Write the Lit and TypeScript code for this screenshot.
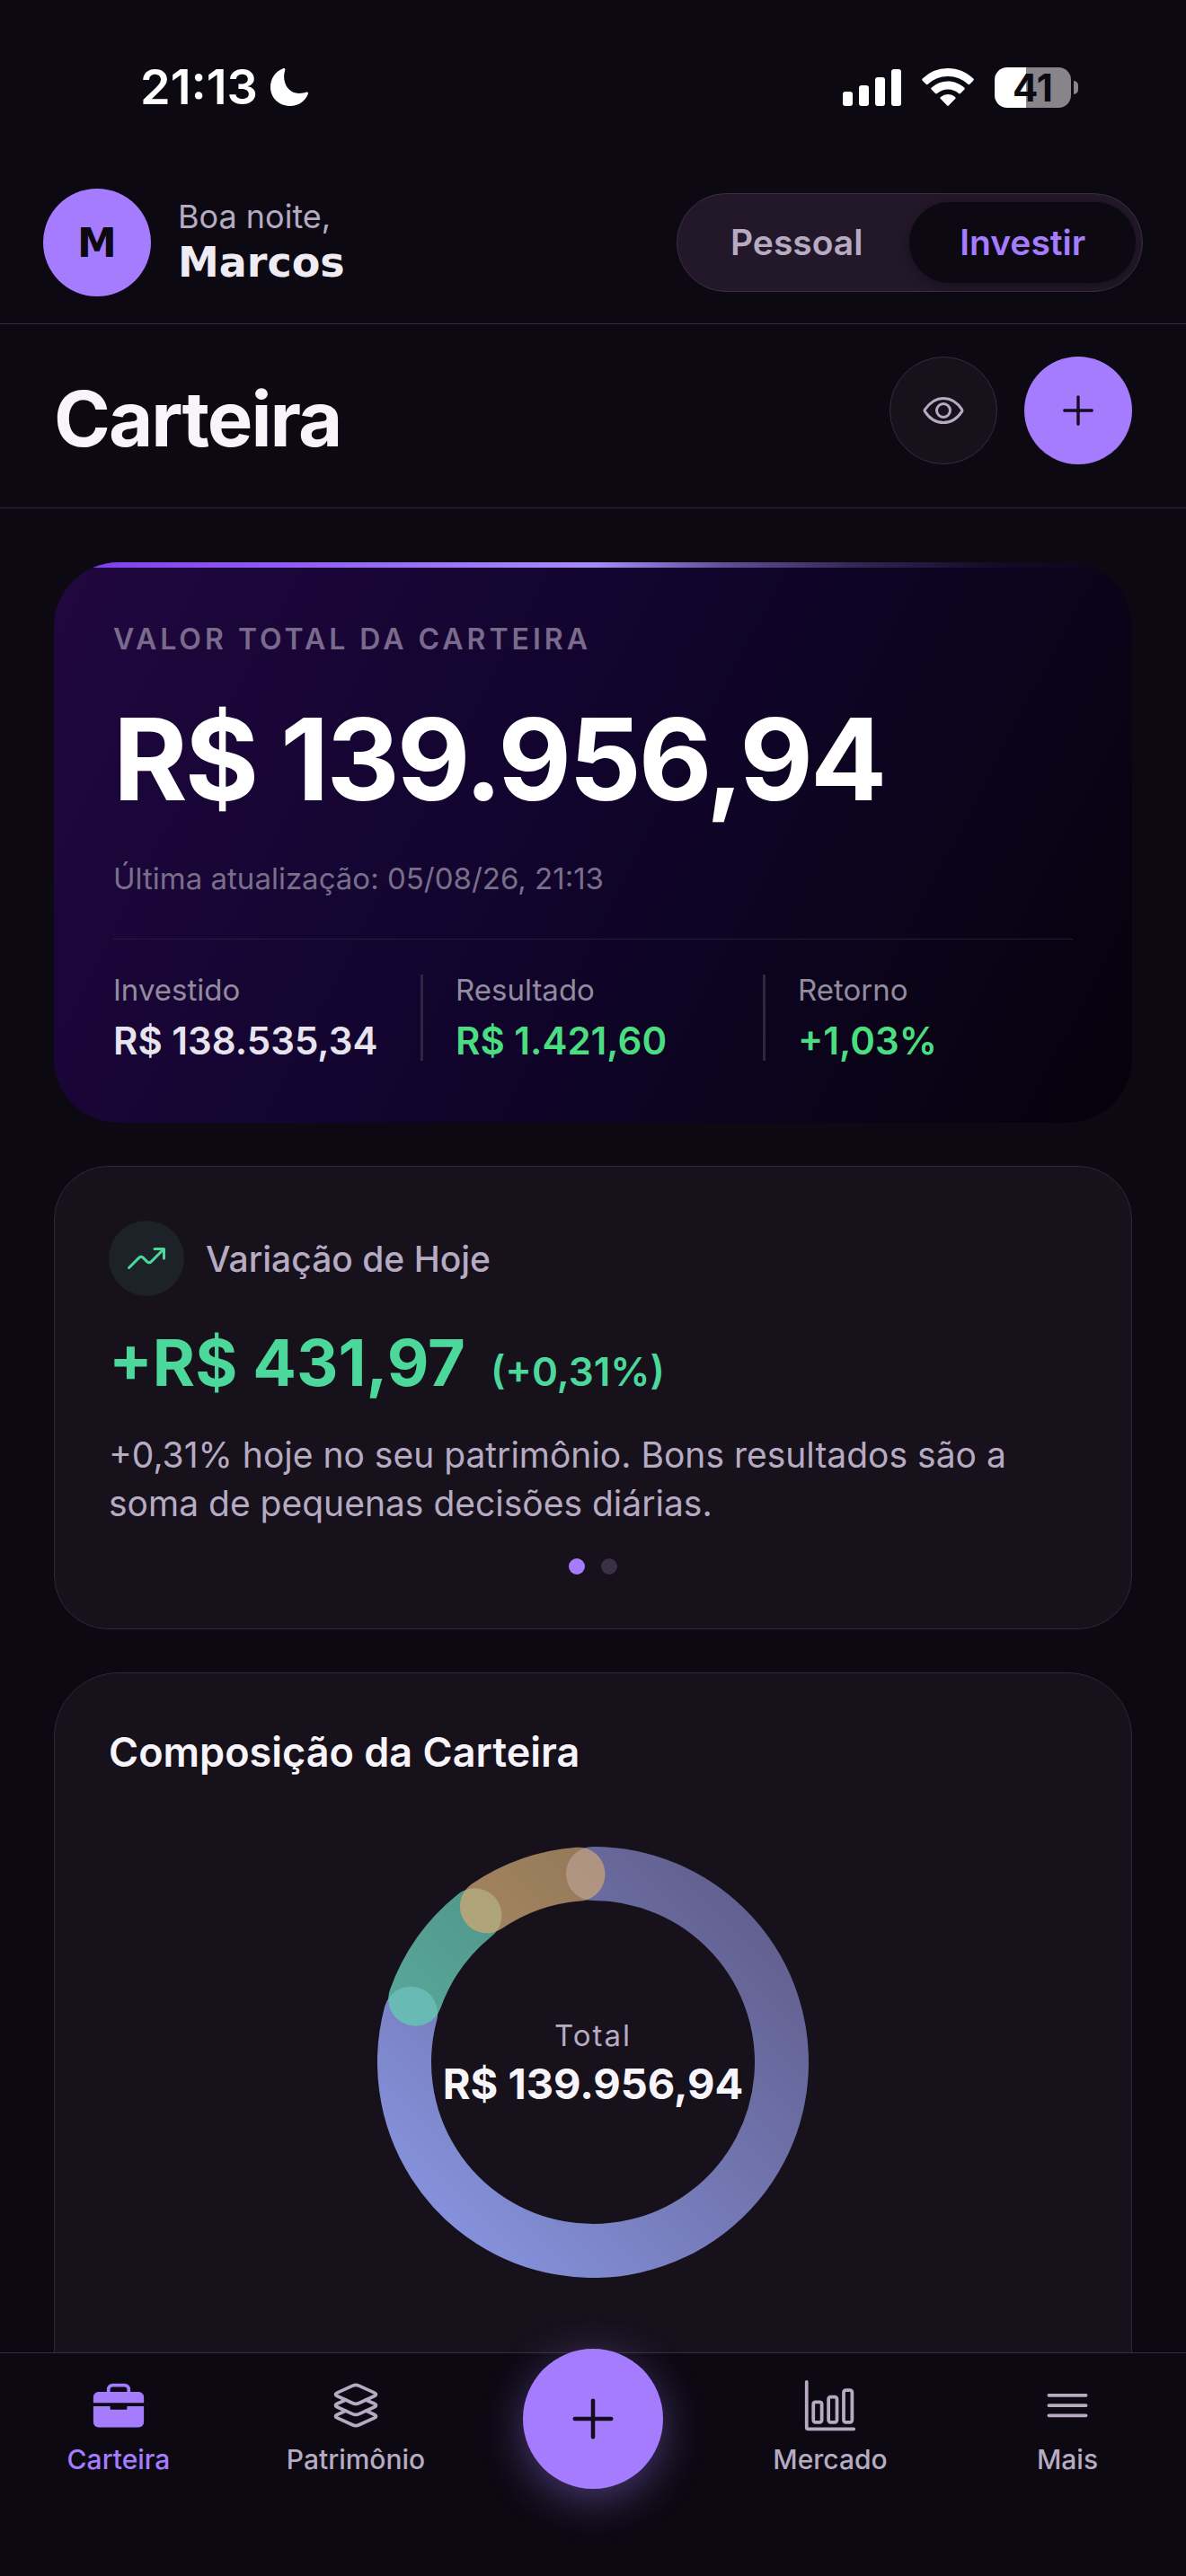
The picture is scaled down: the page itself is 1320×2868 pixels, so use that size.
import { LitElement, html, css, svg } from "lit";
import { customElement, state } from "lit/decorators.js";

interface Slice {
  id: string;
  start: number;
  end: number;
  from: string;
  to: string;
}

const slices: Slice[] = [
  { id: "blue", start: 0, end: 285, from: "#92a4f7", to: "#8987c8" },
  { id: "green", start: 289.6, end: 321.2, from: "#65c8b2", to: "#65c0b0" },
  { id: "amber", start: 325.8, end: 355.5, from: "#cda771", to: "#cda776" },
];

const arc = (start: number, end: number, r = 210, c = 240) => {
  const point = (deg: number) => {
    const a = ((deg - 90) * Math.PI) / 180;
    return `${(c + r * Math.cos(a)).toFixed(2)} ${(c + r * Math.sin(a)).toFixed(2)}`;
  };
  return `M${point(start)}A${r} ${r} 0 ${end - start > 180 ? 1 : 0} 1 ${point(end)}`;
};

const glyphs = {
  eye: svg`<path d="M255.66 112c-77.94 0-157.89 45.11-220.83 135.33a16 16 0 00-.27 17.77C82.92 340.8 161.8 400 255.66 400c92.84 0 173.34-59.38 221.79-135.25a16.14 16.14 0 000-17.47C428.89 172.28 347.8 112 255.66 112z"/><circle cx="256" cy="256" r="80"/>`,
  add: svg`<path d="M256 112v288M400 256H112"/>`,
  trend: svg`<path d="M352 144h112v112"/><path d="M48 368l121.37-121.37a32 32 0 0145.26 0l50.74 50.74a32 32 0 0045.26 0L448 160"/>`,
  briefcase: svg`<g fill="currentColor" stroke="none"><path fill-rule="evenodd" d="M496 176a48.05 48.05 0 00-48-48h-80v-24a56.06 56.06 0 00-56-56H200a56.06 56.06 0 00-56 56v24H64a48.05 48.05 0 00-48 48v56h480zM336 128H176v-24a24 24 0 0124-24h112a24 24 0 0124 24z"/><path d="M336 264v22a10 10 0 01-10 10H186a10 10 0 01-10-10v-22H16v152a48.05 48.05 0 0048 48h384a48.05 48.05 0 0048-48V264z"/></g>`,
  layers: svg`<path d="M434.8 137.65l-149.36-68.1c-16.19-7.4-42.69-7.4-58.88 0L77.3 137.65c-17.6 8-17.6 21.09 0 29.09l148 67.5c16.89 7.7 44.69 7.7 61.58 0l148-67.5c17.52-8 17.52-21.1-.08-29.09z"/><path d="M160 308.52l-82.7 37.11c-17.6 8-17.6 21.1 0 29.1l148 67.5c16.89 7.69 44.69 7.69 61.58 0l148-67.5c17.6-8 17.6-21.1 0-29.1l-79.94-38.47"/><path d="M160 204.48l-82.8 37.16c-17.6 8-17.6 21.1 0 29.1l148 67.49c16.89 7.7 44.69 7.7 61.58 0l148-67.49c17.7-8 17.7-21.1.1-29.1L352 204.48"/>`,
  chart: svg`<path d="M32 32v432a16 16 0 0016 16h432"/><rect x="96" y="224" width="80" height="192" rx="20"/><rect x="240" y="176" width="80" height="240" rx="20"/><rect x="384" y="112" width="80" height="304" rx="20"/>`,
  menu: svg`<path d="M80 160h352M80 256h352M80 352h352"/>`,
};

const icon = (name: keyof typeof glyphs, size: number) => html`
  <svg class="icon" width=${size} height=${size} viewBox="0 0 512 512" aria-hidden="true">${glyphs[name]}</svg>
`;

@customElement("app-root")
export class AppRoot extends LitElement {
  static styles = css`
    :host {
      --bg: #0c0912;
      --card: #17111c;
      --line: #2f2835;
      --accent: #a67cff;
      --text: #f7f5fa;
      --muted: #b6abc3;
      --green: #4cd89a;
      display: grid;
      grid-template-rows: auto minmax(0, 1fr) auto;
      height: 100vh;
      background: var(--bg);
      color: var(--text);
      font-family: Inter, "Liberation Sans", sans-serif;
    }
    * { box-sizing: border-box; }
    h1, h2, p, dl, dd, dt { margin: 0; }
    button { font: inherit; border: 0; padding: 0; cursor: pointer; }
    svg { display: block; }
    .icon {
      fill: none;
      stroke: currentColor;
      stroke-width: 32;
      stroke-linecap: round;
      stroke-linejoin: round;
    }

    .status {
      display: flex;
      justify-content: space-between;
      align-items: center;
      height: 180px;
      padding: 14px 120px 0 156px;
      color: #fff;
    }
    .clock { display: flex; align-items: center; gap: 14px; font-size: 54px; font-weight: 600; line-height: 66px; }
    .signals { display: flex; align-items: center; gap: 23px; }
    .battery { display: flex; align-items: center; gap: 3px; }
    .cell {
      width: 85px;
      height: 45px;
      border-radius: 14px;
      background: linear-gradient(90deg, #fff 41%, #87848a 41%);
      color: var(--bg);
      font-size: 42px;
      font-weight: 700;
      line-height: 45px;
      text-align: center;
    }
    .nub { width: 5px; height: 15px; border-radius: 0 5px 5px 0; background: #87848a; }

    .account {
      display: flex;
      align-items: center;
      justify-content: space-between;
      padding: 30px 48px;
      border-bottom: 1px solid #372e3e;
    }
    .person { display: flex; align-items: center; gap: 30px; }
    .avatar, .round { display: grid; place-items: center; width: 120px; height: 120px; border-radius: 50%; }
    .avatar { background: var(--accent); color: var(--bg); font: 700 44px "DejaVu Sans", sans-serif; }
    .hello { font-size: 36px; line-height: 44px; color: var(--muted); }
    .name { font: 700 46px/58px "DejaVu Sans", sans-serif; color: #efecf4; }
    .modes {
      display: grid;
      grid-template-columns: 1fr 1fr;
      padding: 9px 7px;
      border: 1px solid #3a3041;
      border-radius: 55px;
      background: #221829;
    }
    .mode {
      padding: 0 52px;
      border-radius: 45px;
      background: none;
      color: var(--muted);
      font-size: 39px;
      font-weight: 600;
      line-height: 90px;
    }
    .mode.on { background: var(--bg); color: var(--accent); box-shadow: 0 3px 12px #0c091280; }

    .heading {
      display: flex;
      justify-content: space-between;
      align-items: flex-end;
      padding: 36px 60px 48px;
      border-bottom: 1px solid #2d2833;
    }
    .heading h1 { font-size: 85px; font-weight: 700; line-height: 100px; letter-spacing: -2px; }
    .actions { display: flex; gap: 30px; }
    .round.quiet { background: var(--card); border: 1px solid #352c3b; color: var(--muted); }
    .round.solid { background: var(--accent); color: #150c20; }

    main {
      display: flex;
      flex-direction: column;
      gap: 48px;
      padding: 60px 60px 0;
      overflow-y: auto;
      scrollbar-width: none;
    }
    main > * { flex: none; }

    .total {
      position: relative;
      overflow: hidden;
      padding: 66px;
      border-radius: 72px;
      background: linear-gradient(117.5deg, #21083f 0%, #1b063a 14%, #10042b 50%, #0b041b 75%, #05020b 100%);
    }
    .total::before {
      content: "";
      position: absolute;
      inset: 0 0 auto;
      height: 6px;
      background: linear-gradient(90deg, #7c3aed, #a78bfa 50%, #7d68bcbf 62%, #53457d80 75%, #2a233f40 87%, #00000000);
    }
    .caption { font-size: 32px; font-weight: 600; line-height: 40px; letter-spacing: 4px; color: #7a6a8b; }
    .amount { margin-top: 36px; font-size: 126px; font-weight: 700; line-height: 154px; letter-spacing: -3px; color: #fff; }
    .updated { margin-top: 36px; font-size: 33px; line-height: 40px; color: #7a6f8a; }
    .stats {
      display: flex;
      align-items: center;
      gap: 36px;
      margin-top: 47px;
      padding-top: 36px;
      border-top: 1px solid #271c38;
    }
    .stat { flex: 1 1 0; min-width: 0; white-space: nowrap; }
    .stat dt { font-size: 33px; line-height: 40px; color: #938b9e; }
    .stat dd { margin-top: 12px; font-size: 42px; font-weight: 600; line-height: 50px; color: #e8e4ee; }
    .stat.up dd { color: #4ade80; }
    .rule { width: 3px; height: 96px; background: #30263f; }

    .panel { padding: 60px; border: 1px solid var(--line); background: var(--card); }
    .today { border-radius: 60px; }
    .topic { display: flex; align-items: center; gap: 24px; font-size: 39px; font-weight: 500; color: var(--muted); }
    .badge { display: grid; place-items: center; width: 84px; height: 84px; border-radius: 50%; background: #1c2228; color: var(--green); }
    .change { display: flex; align-items: baseline; gap: 28px; margin-top: 30px; color: var(--green); font-size: 72px; font-weight: 700; line-height: 88px; }
    .percent { font-size: 44px; font-weight: 600; line-height: 50px; }
    .note { margin-top: 32px; font-size: 39px; line-height: 54px; color: var(--muted); }
    .dots { display: flex; justify-content: center; gap: 18px; margin-top: 34px; }
    .dot { width: 18px; height: 18px; border-radius: 50%; background: #3b3044; }
    .dot.on { background: var(--accent); }

    .mix { border-radius: 72px; padding-bottom: 240px; }
    .mix h2 { font-size: 45px; font-weight: 600; line-height: 56px; }
    .donut { display: grid; place-items: center; margin-top: 77px; }
    .donut > * { grid-area: 1 / 1; }
    .hub { text-align: center; }
    .hub-label { font-size: 33px; line-height: 48px; letter-spacing: 2px; color: var(--muted); }
    .hub-value { font-size: 47px; font-weight: 700; line-height: 60px; }

    nav {
      position: relative;
      display: grid;
      grid-template-columns: repeat(5, 1fr);
      justify-items: center;
      align-items: start;
      border-top: 1px solid #372e3e;
      background: var(--bg);
      padding-bottom: 110px;
    }
    .tab {
      display: flex;
      flex-direction: column;
      align-items: center;
      gap: 10px;
      padding-top: 28px;
      color: var(--muted);
      font-size: 30px;
      font-weight: 500;
      line-height: 40px;
      text-decoration: none;
    }
    .tab.on { color: var(--accent); }
    .fab {
      display: grid;
      place-items: center;
      width: 156px;
      height: 156px;
      margin: -5px 0 -60px;
      border-radius: 50%;
      background: var(--accent);
      color: #150c20;
      box-shadow: 0 12px 48px #a67cff66;
    }
  `;

  @state() private mode = "Investir";

  private renderStatus() {
    return html`
      <div class="status">
        <div class="clock">
          <span>21:13</span>
          <svg width="42" height="42" viewBox="0 0 42 42" aria-hidden="true">
            <path fill="currentColor" d="M14 .3c1.500-.8 2.800.4 2.200 2C12.500 14 18.500 28 32 28c3 0 5.500-.4 7.800-1.400 1.600-.5 2.700.6 2 2.200C38.500 37 31 42 22 42 9.500 42 0 33 0 21 0 11.500 5.500 3.600 14 .3z" />
          </svg>
        </div>
        <div class="signals">
          <svg width="65" height="42" viewBox="0 0 65 42" fill="currentColor" aria-hidden="true">
            <rect y="26" width="11" height="16" rx="3" /><rect x="18" y="19" width="11" height="23" rx="3" />
            <rect x="36" y="10" width="11" height="32" rx="3" /><rect x="54" y="1" width="11" height="41" rx="3" />
          </svg>
          <svg width="58" height="42" viewBox="0 0 58 42" fill="currentColor" aria-hidden="true">
            <path d="M29 0c11 0 21 4.300 28.300 11.500.7.700.7 1.500 0 2.200l-4 4.100c-.6.600-1.400.600-2 0A32 32 0 0 0 29 9 32 32 0 0 0 6.700 17.800c-.6.600-1.400.600-2 0l-4-4.100c-.7-.7-.7-1.500 0-2.200A40.300 40.300 0 0 1 29 0z" />
            <path d="M29 14.500c7 0 13.400 2.700 18.200 7.100.7.700.7 1.500 0 2.200l-4.200 4.300c-.6.600-1.300.600-2 0A17.500 17.500 0 0 0 29 23.500c-4.600 0-8.800 1.700-12 4.600-.7.600-1.400.6-2 0l-4.200-4.300c-.7-.7-.7-1.500 0-2.200A26.800 26.800 0 0 1 29 14.500z" />
            <path d="M29 29c3 0 5.800 1.100 8 2.900.8.700.8 1.500.1 2.200l-7 7.200c-.7.700-1.500.7-2.200 0l-7-7.200c-.7-.7-.7-1.500.1-2.200A12.500 12.500 0 0 1 29 29z" />
          </svg>
          <div class="battery"><div class="cell">41</div><div class="nub"></div></div>
        </div>
      </div>
    `;
  }

  private renderTotal() {
    return html`
      <section class="total">
        <p class="caption">VALOR TOTAL DA CARTEIRA</p>
        <p class="amount">R$ 139.956,94</p>
        <p class="updated">Última atualização: 05/08/26, 21:13</p>
        <dl class="stats">
          <div class="stat"><dt>Investido</dt><dd>R$ 138.535,34</dd></div>
          <div class="rule"></div>
          <div class="stat up"><dt>Resultado</dt><dd>R$ 1.421,60</dd></div>
          <div class="rule"></div>
          <div class="stat up"><dt>Retorno</dt><dd>+1,03%</dd></div>
        </dl>
      </section>
    `;
  }

  private renderDonut() {
    return html`
      <div class="donut">
        <svg width="480" height="480" viewBox="0 0 480 480" aria-hidden="true">
          <defs>
            ${slices.map(
              (s) => svg`<linearGradient id=${s.id} gradientUnits="userSpaceOnUse" x1="0" y1="480" x2="480" y2="0">
                <stop offset="0" stop-color=${s.from} stop-opacity="0.95" />
                <stop offset="1" stop-color=${s.to} stop-opacity="0.6" />
              </linearGradient>`
            )}
          </defs>
          ${slices.map(
            (s) => svg`<path d=${arc(s.start, s.end)} fill="none" stroke=${`url(#${s.id})`} stroke-width="60" stroke-linecap="round" />`
          )}
        </svg>
        <div class="hub">
          <p class="hub-label">Total</p>
          <p class="hub-value">R$ 139.956,94</p>
        </div>
      </div>
    `;
  }

  render() {
    return html`
      <header>
        ${this.renderStatus()}
        <div class="account">
          <div class="person">
            <div class="avatar">M</div>
            <div>
              <p class="hello">Boa noite,</p>
              <p class="name">Marcos</p>
            </div>
          </div>
          <div class="modes">
            ${["Pessoal", "Investir"].map(
              (m) => html`<button class="mode ${m === this.mode ? "on" : ""}" @click=${() => (this.mode = m)}>${m}</button>`
            )}
          </div>
        </div>
        <div class="heading">
          <h1>Carteira</h1>
          <div class="actions">
            <button class="round quiet" aria-label="Ocultar valores">${icon("eye", 48)}</button>
            <button class="round solid" aria-label="Adicionar">${icon("add", 54)}</button>
          </div>
        </div>
      </header>
      <main>
        ${this.renderTotal()}
        <section class="panel today">
          <div class="topic"><span class="badge">${icon("trend", 48)}</span>Variação de Hoje</div>
          <p class="change"><span>+R$ 431,97</span><span class="percent">(+0,31%)</span></p>
          <p class="note">+0,31% hoje no seu patrimônio. Bons resultados são a soma de pequenas decisões diárias.</p>
          <div class="dots"><span class="dot on"></span><span class="dot"></span></div>
        </section>
        <section class="panel mix">
          <h2>Composição da Carteira</h2>
          ${this.renderDonut()}
        </section>
      </main>
      <nav>
        <a class="tab on" href="#carteira">${icon("briefcase", 60)}<span>Carteira</span></a>
        <a class="tab" href="#patrimonio">${icon("layers", 60)}<span>Patrimônio</span></a>
        <button class="fab" aria-label="Nova transação">${icon("add", 72)}</button>
        <a class="tab" href="#mercado">${icon("chart", 60)}<span>Mercado</span></a>
        <a class="tab" href="#mais">${icon("menu", 60)}<span>Mais</span></a>
      </nav>
    `;
  }
}
